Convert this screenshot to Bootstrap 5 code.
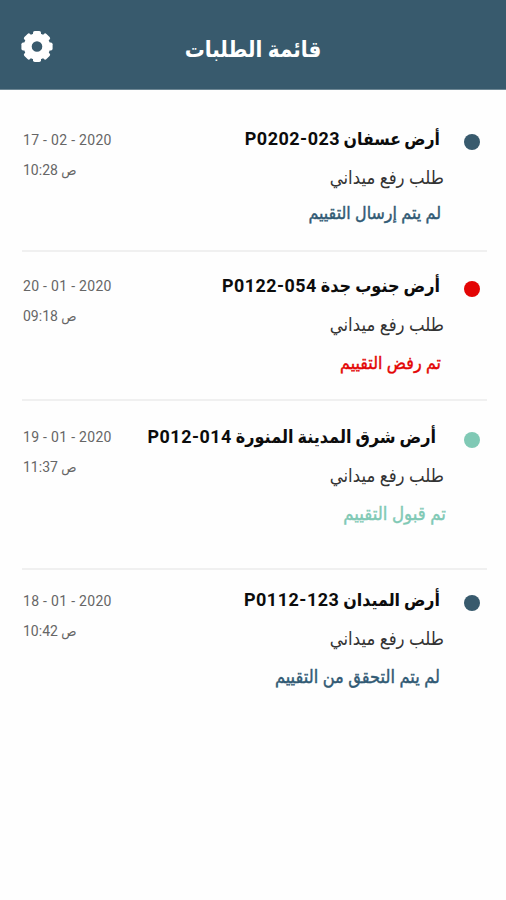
<!DOCTYPE html>
<html lang="ar">
<head>
<meta charset="utf-8">
<meta name="viewport" content="width=device-width, initial-scale=1">
<title>قائمة الطلبات</title>
<link rel="stylesheet" href="https://cdn.jsdelivr.net/npm/bootstrap@5.3.0/dist/css/bootstrap.min.css">
<style>
:root{--brand:#385a6d;--danger:#e30505;--mint:#80c9b5}
body{font-family:Roboto,"DejaVu Sans Condensed",sans-serif;background:#fefefe;min-height:100vh}
.topbar{height:90px;background:var(--brand);border-bottom:1px solid #6e8794;padding:2px 20px 0;display:grid;grid-template-columns:34px 1fr 34px}
.topbar h1{font-size:22.2px;padding-top:8px}
.gear{width:34px;height:34px}
.requests{padding:0 19px 0 22px}
.request{border-bottom:2px solid #f0f0f0;white-space:nowrap}
.request:last-child{border-bottom:0}
.r1{height:162px;padding-top:34px}
.r2{height:149px;padding-top:19px}
.r3{height:169px;padding-top:21px}
.r4{height:160px;padding-top:15px}
.when{font-size:14px;line-height:30px;color:#666;letter-spacing:.3px;padding:1px 0 0 1px}
.when .hour{letter-spacing:.1px}
.r2 .when,.r3 .when{padding-top:0}
.what{margin-left:auto;margin-right:20px;direction:rtl}
.what>*{line-height:30px;height:30px}
.heading{font-size:17.9px;font-weight:700;color:#0c0c0c;margin:0 4px 9px 0;word-spacing:-.5px}
.code{letter-spacing:.5px}
.r1 .heading{word-spacing:-1px;font-size:17.5px}
.r1 .code,.r4 .code{font-size:18px}
.r3 .heading{margin-right:8px}
.r4 .heading{font-size:17.7px}
.kind{font-size:18.4px;color:#333;margin-bottom:8px}
.state{font-size:17.7px;margin-right:3px;-webkit-text-stroke:.4px currentColor}
.r1 .kind{margin-bottom:5px}
.r3 .state{margin-right:-2px;font-size:18.5px}
.r4 .state{margin-right:4px;font-size:18.1px}
.st-open{color:#315a74}
.st-no{color:var(--danger)}
.st-yes{color:var(--mint)}
.dot{width:16px;height:16px;background:currentColor;margin:10px 7px 0 0}
.dot.st-open{color:var(--brand)}
</style>
</head>
<body>
<header class="topbar align-items-center text-white">
  <svg class="gear" viewBox="0 0 34 34" aria-hidden="true">
    <g fill="#fff" transform="translate(17 17.5)">
      <path fill-rule="evenodd" d="M0-13.2A13.2 13.2 0 1 1 0 13.2A13.2 13.2 0 1 1 0-13.2ZM0-5.3A5.3 5.3 0 1 0 0 5.3A5.3 5.3 0 1 0 0-5.3Z"/>
      <g id="teeth"><rect x="-4" y="-15.6" width="8" height="5" rx="1.8"/><rect x="-4" y="10.6" width="8" height="5" rx="1.8"/><rect x="-15.6" y="-4" width="5" height="8" rx="1.8"/><rect x="10.6" y="-4" width="5" height="8" rx="1.8"/></g>
      <use href="#teeth" transform="rotate(45)"/>
    </g>
  </svg>
  <h1 class="m-0 fw-bold text-center" dir="rtl">قائمة الطلبات</h1>
</header>
<main class="requests">
  <article class="request r1 d-flex align-items-start">
    <div class="when"><div>17 - 02 - 2020</div><div class="hour">10:28 ص</div></div>
    <div class="what"><h2 class="heading">أرض عسفان <bdi class="code">P0202-023</bdi></h2><div class="kind">طلب رفع ميداني</div><div class="state st-open">لم يتم إرسال التقييم</div></div>
    <span class="dot rounded-circle st-open"></span>
  </article>
  <article class="request r2 d-flex align-items-start">
    <div class="when"><div>20 - 01 - 2020</div><div class="hour">09:18 ص</div></div>
    <div class="what"><h2 class="heading">أرض جنوب جدة <bdi class="code">P0122-054</bdi></h2><div class="kind">طلب رفع ميداني</div><div class="state st-no">تم رفض التقييم</div></div>
    <span class="dot rounded-circle st-no"></span>
  </article>
  <article class="request r3 d-flex align-items-start">
    <div class="when"><div>19 - 01 - 2020</div><div class="hour">11:37 ص</div></div>
    <div class="what"><h2 class="heading">أرض شرق المدينة المنورة <bdi class="code">P012-014</bdi></h2><div class="kind">طلب رفع ميداني</div><div class="state st-yes">تم قبول التقييم</div></div>
    <span class="dot rounded-circle st-yes"></span>
  </article>
  <article class="request r4 d-flex align-items-start">
    <div class="when"><div>18 - 01 - 2020</div><div class="hour">10:42 ص</div></div>
    <div class="what"><h2 class="heading">أرض الميدان <bdi class="code">P0112-123</bdi></h2><div class="kind">طلب رفع ميداني</div><div class="state st-open">لم يتم التحقق من التقييم</div></div>
    <span class="dot rounded-circle st-open"></span>
  </article>
</main>
<script src="https://cdn.jsdelivr.net/npm/bootstrap@5.3.0/dist/js/bootstrap.bundle.min.js"></script>
</body>
</html>
